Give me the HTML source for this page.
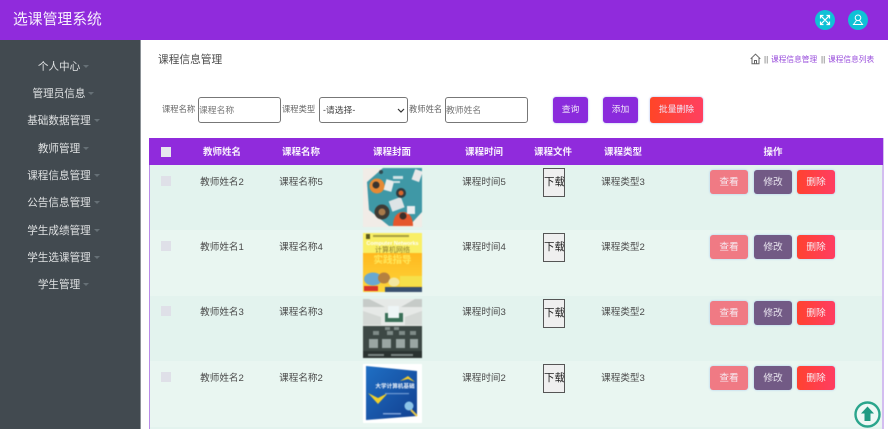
<!DOCTYPE html>
<html lang="zh"><head><meta charset="utf-8"><title>选课管理系统</title>
<style>
*{box-sizing:border-box}
html,body{margin:0;padding:0;width:888px;height:429px;overflow:hidden;background:#fff;font-family:"Liberation Sans","Noto Sans CJK SC",sans-serif;color:#555}
#w{position:absolute;left:0;top:0;width:888px;height:429px;overflow:hidden;filter:blur(.35px)}
.a{position:absolute;white-space:nowrap}
.top{position:absolute;left:0;top:0;width:888px;height:40px;background:#902bdc}
.side{position:absolute;left:0;top:40px;width:141px;height:389px;background:#424a50;border-right:1px solid #8b9196}
.m{position:absolute;left:0;width:118px;text-align:center;font-size:10.6px;color:#dfe1e2;line-height:14px;white-space:nowrap}
.m i{display:inline-block;width:0;height:0;border:3px solid transparent;border-top:3px solid #667076;border-bottom:0;margin:0 -9px 0 3px;vertical-align:2px}
.in{position:absolute;top:97px;height:26px;border:1px solid #777;border-radius:3px;font-size:8.8px;line-height:24px;color:#777;background:#fff}
.btn{position:absolute;top:97px;height:26px;border-radius:3px;color:#f0e6f9;font-size:8.8px;line-height:24px;text-align:center;box-shadow:0 0 2px #a9b9f0}
.p{background:#8a2bdc}
.r{background:linear-gradient(90deg,#ff4527,#ff4060)}
.tbl{position:absolute;left:149px;top:138px;width:735px;height:291px;border-left:1px solid #b98ce8;border-right:2px solid #d3bdf0}
.th{position:absolute;left:149px;top:138px;width:734px;height:27px;background:#902bdc}
.h{position:absolute;top:146px;font-size:9.5px;font-weight:bold;color:#f8f2fd;line-height:13px;white-space:nowrap;transform:translateX(-50%)}
.row{position:absolute;left:150px;width:732px}
.t{position:absolute;font-size:9.6px;line-height:14px;color:#4a4a4a;white-space:nowrap;transform:translateX(-50%)}
.cb{position:absolute;left:161px;width:10px;height:10px;background:#dfe0e8}
.dl{position:absolute;left:543px;width:22px;height:29px;background:#efefef;border:1px solid #555;font-size:10.5px;line-height:27px;color:#222;overflow:hidden;white-space:nowrap}
.b{position:absolute;width:38px;height:24px;border-radius:3px;font-size:9.7px;line-height:25px;text-align:center;color:#f6eaf1;box-shadow:0 0 2px #a9c9f0}
.v{left:710px;background:#f07a84}
.e{left:754px;background:#725a85;color:#e8e4ee}
.d{left:797px;width:38px;background:linear-gradient(90deg,#ff4230,#ff3d62)}
.img{position:absolute;left:363px;width:59px;height:59px;overflow:hidden;filter:blur(.6px)}
</style></head><body><div id="w">
<div class="top"></div>
<div class="a" style="left:13px;top:10px;font-size:14.8px;line-height:21px;color:#f6effc">选课管理系统</div>
<svg class="a" style="left:815px;top:10px" width="20" height="20" viewBox="0 0 20 20"><circle cx="10" cy="10" r="10" fill="#0fc1d6"/><path d="M6 6L14 14M14 6L6 14M5.500 8.500V5.500H8.500M11.500 5.500H14.500V8.500M5.500 11.500V14.500H8.500M11.500 14.500H14.500V11.500" stroke="#fff" stroke-width="1.200" fill="none"/></svg>
<svg class="a" style="left:848px;top:10px" width="20" height="20" viewBox="0 0 20 20"><circle cx="10" cy="10" r="10" fill="#0fc1d6"/><g stroke="#fff" stroke-width="1" fill="none"><circle cx="10" cy="7.800" r="2.800"/><path d="M8.500 10.500L5.500 14.500H14.500L11.500 10.500"/></g></svg>

<div class="side"></div>
<div class="m" style="top:60px">个人中心<i></i></div>
<div class="m" style="top:87px">管理员信息<i></i></div>
<div class="m" style="top:114px">基础数据管理<i></i></div>
<div class="m" style="top:142px">教师管理<i></i></div>
<div class="m" style="top:169px">课程信息管理<i></i></div>
<div class="m" style="top:196px">公告信息管理<i></i></div>
<div class="m" style="top:224px">学生成绩管理<i></i></div>
<div class="m" style="top:251px">学生选课管理<i></i></div>
<div class="m" style="top:278px">学生管理<i></i></div>

<div class="a" style="left:158px;top:53px;font-size:10.7px;line-height:15px;color:#4a4a4a">课程信息管理</div>
<svg class="a" style="left:750px;top:53px" width="11" height="12" viewBox="0 0 11 12"><path d="M.7 5.800L5.500 1.200 10.300 5.800M2 5V10.800H9V5M4.500 10.800V7.500H6.500V10.800" fill="none" stroke="#666" stroke-width="1"/></svg>
<div class="a" style="left:764px;top:53px;font-size:8px;line-height:13px;color:#666">||</div>
<div class="a" style="left:771px;top:53px;font-size:7.700px;line-height:13px;color:#9a4fdc">课程信息管理</div>
<div class="a" style="left:821px;top:53px;font-size:8px;line-height:13px;color:#666">||</div>
<div class="a" style="left:828px;top:53px;font-size:7.700px;line-height:13px;color:#9a4fdc">课程信息列表</div>

<div class="a" style="left:162px;top:103px;font-size:8.300px;line-height:13px;color:#666">课程名称</div>
<div class="in" style="left:198px;width:83px">课程名称</div>
<div class="a" style="left:282px;top:103px;font-size:8.300px;line-height:13px;color:#666">课程类型</div>
<div class="in" style="left:319px;width:89px;padding-left:3px;color:#444">-请选择-
<svg style="position:absolute;right:2px;top:10px" width="8" height="5" viewBox="0 0 8 5"><path d="M1 1L4 4 7 1" fill="none" stroke="#333" stroke-width="1.200"/></svg></div>
<div class="a" style="left:409px;top:103px;font-size:8.300px;line-height:13px;color:#666">教师姓名</div>
<div class="in" style="left:445px;width:83px">教师姓名</div>
<div class="btn p" style="left:553px;width:35px">查询</div>
<div class="btn p" style="left:603px;width:35px">添加</div>
<div class="btn r" style="left:650px;width:53px">批量删除</div>

<div class="row" style="top:165px;height:65px;background:#e3f3ee"></div>
<div class="row" style="top:230px;height:66px;background:#e9f6f1"></div>
<div class="row" style="top:296px;height:65px;background:#e3f3ee"></div>
<div class="row" style="top:361px;height:66px;background:#e9f6f1"></div>
<div class="row" style="top:427px;height:2px;background:#e3f3ee"></div>
<div class="tbl"></div>
<div class="th"></div>
<div class="a" style="left:161px;top:147px;width:10px;height:10px;background:#e6e6ee"></div>
<div class="h" style="left:222px">教师姓名</div>
<div class="h" style="left:301px">课程名称</div>
<div class="h" style="left:392px">课程封面</div>
<div class="h" style="left:484px">课程时间</div>
<div class="h" style="left:553px">课程文件</div>
<div class="h" style="left:623px">课程类型</div>
<div class="h" style="left:773px">操作</div>

<!-- row 1 -->
<div class="cb" style="top:176px"></div>
<div class="t" style="left:222px;top:176px">教师姓名2</div>
<div class="t" style="left:301px;top:176px">课程名称5</div>
<div class="img" style="top:168px;background:#f1ece7"><svg width="59" height="59" viewBox="0 0 59 59"><path d="M20 0H59V44L46 58H26L6 42 4 14Z" fill="#3f98a6"/><circle cx="14" cy="18" r="7.500" fill="#e58a35"/><circle cx="13" cy="17" r="3.500" fill="#3a3430"/><rect x="22" y="12" width="8" height="11" fill="#e8ecec" transform="rotate(15 26 17)"/><circle cx="19" cy="44" r="7.500" fill="#3e3a34"/><circle cx="19" cy="44" r="3.500" fill="#a87a4a"/><rect x="27" y="31" width="13" height="11" fill="#dde4e6" transform="rotate(-20 33 36)"/><circle cx="38" cy="25" r="5" fill="#2f3a3f"/><circle cx="38" cy="25" r="2.500" fill="#d8662c"/><path d="M30 58C30 48 35 44 40 44S50 48 50 58Z" fill="#e4562c"/><circle cx="40" cy="48" r="3.500" fill="#3b2f2a"/><rect x="50" y="2" width="8" height="11" fill="#e8e8e8" transform="rotate(20 54 8)"/><rect x="44" y="38" width="8" height="8" fill="#e8ecee"/><rect x="30" y="8" width="10" height="3" fill="#cfe2e4"/><rect x="30" y="13" width="7" height="2" fill="#cfe2e4"/><circle cx="18" cy="4" r="2" fill="#2f4a50"/></svg></div>
<div class="dl" style="top:168px">下载</div>
<div class="t" style="left:484px;top:176px">课程时间5</div>
<div class="t" style="left:623px;top:176px">课程类型3</div>
<div class="b v" style="top:170px">查看</div><div class="b e" style="top:170px">修改</div><div class="b d" style="top:170px">删除</div>

<!-- row 2 -->
<div class="cb" style="top:241px"></div>
<div class="t" style="left:222px;top:241px">教师姓名1</div>
<div class="t" style="left:301px;top:241px">课程名称4</div>
<div class="img" style="top:233px;background:#fbec55"><svg width="59" height="59" viewBox="0 0 59 59"><defs><linearGradient id="g1" x1="0" y1="0" x2="0" y2="1"><stop offset="0" stop-color="#ffb81f"/><stop offset="1" stop-color="#fdd63a"/></linearGradient></defs><rect width="59" height="20" fill="#f9ef66"/><rect y="20" width="59" height="39" fill="url(#g1)"/><rect x="3" y="1" width="4" height="5" fill="#5a5a20"/><rect x="10" y="2" width="36" height="2" fill="#a8a040"/><text x="29.500" y="12" font-size="5.500" font-weight="bold" fill="#fff" text-anchor="middle">Computer Networks</text><text x="29.500" y="19" font-size="7" fill="#8a7a30" text-anchor="middle">计算机网络</text><text x="29.500" y="30" font-size="9.500" font-weight="bold" fill="#ffe85a" text-anchor="middle">实践指导</text><ellipse cx="10" cy="46" rx="9" ry="6.500" fill="#6aa8d0"/><ellipse cx="21" cy="45" rx="6" ry="5.500" fill="#b5813f"/><ellipse cx="31" cy="49" rx="5.500" ry="4.500" fill="#f3e6a0"/><rect x="37" y="43" width="22" height="10" fill="#f5e04a"/><rect x="22" y="54" width="37" height="5" fill="#38506e"/><rect x="1" y="53" width="14" height="5" fill="#d8332a"/></svg></div>
<div class="dl" style="top:233px">下载</div>
<div class="t" style="left:484px;top:241px">课程时间4</div>
<div class="t" style="left:623px;top:241px">课程类型2</div>
<div class="b v" style="top:235px">查看</div><div class="b e" style="top:235px">修改</div><div class="b d" style="top:235px">删除</div>

<!-- row 3 -->
<div class="cb" style="top:306px"></div>
<div class="t" style="left:222px;top:306px">教师姓名3</div>
<div class="t" style="left:301px;top:306px">课程名称3</div>
<div class="img" style="top:299px;background:#e3e6e4"><svg width="59" height="59" viewBox="0 0 59 59"><rect width="59" height="30" fill="#e6e9e7"/><path d="M0 0H6L22 8H0ZM59 0H52L38 8H59Z" fill="#c6cbc8"/><path d="M0 12L18 18V26H0ZM59 12L42 18V26H59Z" fill="#d4d8d5"/><rect x="22" y="14" width="18" height="9" fill="#3a7058"/><rect x="25" y="7" width="11" height="12" fill="#eef5f6"/><rect y="27" width="59" height="32" fill="#3d4845"/><g fill="#7f8b88"><rect x="22" y="28" width="5" height="3"/><rect x="31" y="28" width="5" height="3"/><rect x="10" y="32" width="6" height="4"/><rect x="24" y="32" width="6" height="4"/><rect x="36" y="32" width="6" height="4"/><rect x="47" y="32" width="6" height="4"/></g><g fill="#9aa6a3"><rect x="6" y="40" width="9" height="9"/><rect x="19" y="40" width="9" height="9"/><rect x="33" y="40" width="9" height="9"/><rect x="47" y="40" width="8" height="9"/></g><rect x="0" y="52" width="59" height="7" fill="#2b3331"/><rect x="5" y="55" width="16" height="2" fill="#7b8683"/><rect x="28" y="55" width="22" height="2" fill="#7b8683"/></svg></div>
<div class="dl" style="top:299px">下载</div>
<div class="t" style="left:484px;top:306px">课程时间3</div>
<div class="t" style="left:623px;top:306px">课程类型2</div>
<div class="b v" style="top:301px">查看</div><div class="b e" style="top:301px">修改</div><div class="b d" style="top:301px">删除</div>

<!-- row 4 -->
<div class="cb" style="top:372px"></div>
<div class="t" style="left:222px;top:372px">教师姓名2</div>
<div class="t" style="left:301px;top:372px">课程名称2</div>
<div class="img" style="top:364px;background:#fff"><svg width="59" height="59" viewBox="0 0 59 59"><defs><linearGradient id="g2" x1="0" y1="0" x2="1" y2="1"><stop offset="0" stop-color="#1f6fc4"/><stop offset="1" stop-color="#123f8f"/></linearGradient></defs><path d="M3 2L54 7V52L3 56Z" fill="url(#g2)"/><path d="M37 17L45 12 52 18 45 15Z" fill="#f2c92a"/><path d="M5 29L15 34 25 29 15 40Z" fill="#f2d02a"/><text x="32" y="24" font-size="5.600" font-weight="bold" fill="#f2f6fb" text-anchor="middle">大学计算机基础</text><circle cx="46" cy="42" r="4.500" fill="#8cc4e8"/><path d="M48 46L54 52" stroke="#e8c84a" stroke-width="2"/><rect x="22" y="29" width="24" height="1.200" fill="#6f9ad4"/><rect x="20" y="49" width="18" height="1.500" fill="#7fa2d8"/></svg></div>
<div class="dl" style="top:364px">下载</div>
<div class="t" style="left:484px;top:372px">课程时间2</div>
<div class="t" style="left:623px;top:372px">课程类型3</div>
<div class="b v" style="top:366px">查看</div><div class="b e" style="top:366px">修改</div><div class="b d" style="top:366px">删除</div>

<svg class="a" style="left:854px;top:401px" width="27" height="27" viewBox="0 0 27 27"><circle cx="13.500" cy="13.500" r="12" fill="#eef8f5" stroke="#2aa58c" stroke-width="2.400"/><path d="M13.500 5.500L20 12.500H16.500V20H10.500V12.500H7Z" fill="#1f9a82"/></svg>
</div></body></html>
